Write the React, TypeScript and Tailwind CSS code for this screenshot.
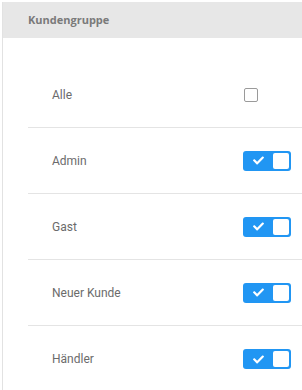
const groups = [
  { name: "Admin", on: true },
  { name: "Gast", on: true },
  { name: "Neuer Kunde", on: true },
  { name: "Händler", on: true },
];

function Toggle({ on }: { on: boolean }) {
  return (
    <div
      className={`flex h-[20px] w-[48px] items-center justify-between rounded-[3px] p-[2px] ${
        on ? "bg-[#2196f3]" : "bg-[#cccccc]"
      }`}
    >
      <div className="flex w-[26px] justify-center">
        <svg viewBox="0 0 512 512" className="h-[11px] w-[11px] fill-white">
          <path d="M173.9 439.4 7.5 273c-10-10-10-26.2 0-36.2l36.2-36.2c10-10 26.2-10 36.2 0L192 312.7 432.1 72.6c10-10 26.2-10 36.2 0l36.2 36.2c10 10 10 26.2 0 36.2L210.1 439.4c-10 10-26.2 10-36.2 0z" />
        </svg>
      </div>
      <div className="h-[16px] w-[16px] rounded-[2px] bg-white" />
    </div>
  );
}

export default function App() {
  return (
    <div className="h-[390px] w-[302px] overflow-hidden bg-white pl-[2px] pt-[2px] font-['Roboto',sans-serif]">
      <div className="h-full border-l border-[#e2e2e2]">
        <div className="flex h-[36px] items-center bg-[#e7e7e7] pl-[25px] font-['Open_Sans',sans-serif] text-[11px] font-bold text-[#7a7a7a]">
          Kundengruppe
        </div>
        <div className="pl-[25px] pt-[24px]">
          <div className="flex h-[66px] items-center justify-between border-b border-[#e4e4e4] pl-[24px] pr-[11px]">
            <span className="text-[12px] text-[#6b6b6b]">Alle</span>
            <div className="mr-[33px] h-[14px] w-[14px] rounded-[2px] border border-[#9a9a9a]" />
          </div>
          {groups.map((g, i) => (
            <div
              key={g.name}
              className={`flex h-[66px] items-center justify-between pl-[24px] pr-[11px] ${
                i < groups.length - 1 ? "border-b border-[#e4e4e4]" : ""
              }`}
            >
              <span className="text-[12px] text-[#6b6b6b]">{g.name}</span>
              <Toggle on={g.on} />
            </div>
          ))}
        </div>
      </div>
    </div>
  );
}
